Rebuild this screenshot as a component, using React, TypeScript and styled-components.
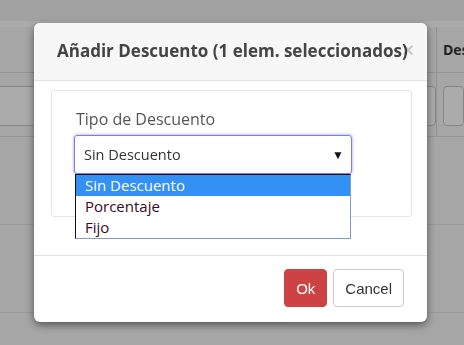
import React from 'react';
import styled, { createGlobalStyle } from 'styled-components';

const GlobalStyle = createGlobalStyle`
  * { box-sizing: border-box; }
  html, body { margin: 0; padding: 0; }
  body {
    width: 464px;
    height: 345px;
    overflow: hidden;
    background: #f8f8f8;
    font-family: "Open Sans", "Liberation Sans", sans-serif;
  }
`;

const Page = styled.div`
  display: flex;
  flex-direction: column;
  height: 345px;
`;

const TopStrip = styled.div`
  height: 21px;
  background: #f2f2f2;
  flex-shrink: 0;
`;

const WhiteBand = styled.div`
  height: 6px;
  background: #ffffff;
  flex-shrink: 0;
`;

const Table = styled.div`
  display: grid;
  grid-template-columns: 436px 1fr;
  background: #f8f8f8;
`;

const HeadCell = styled.div<{ $divider?: boolean }>`
  height: 46px;
  border-bottom: 1px solid #dcdcdc;
  border-left: ${(p) => (p.$divider ? '1px solid #dcdcdc' : 'none')};
  display: flex;
  align-items: center;
  padding-left: 6px;
  font-weight: 700;
  font-size: 14px;
  color: #333;
  white-space: nowrap;
  overflow: hidden;
`;

const FilterCell = styled.div<{ $divider?: boolean }>`
  height: 64px;
  border-bottom: 1px solid #dcdcdc;
  border-left: ${(p) => (p.$divider ? '1px solid #dcdcdc' : 'none')};
  padding: 13px 0 0 6px;
`;

const FilterBox = styled.div<{ $offset?: number }>`
  height: 40px;
  margin-left: ${(p) => p.$offset ?? 0}px;
  border: 1px solid #c8c8c8;
  border-radius: 4px;
  background: #fff;
`;

const BodyRow = styled.div`
  grid-column: 1 / span 2;
  height: 88px;
  border-bottom: 1px solid #e4e4e4;
`;

const Backdrop = styled.div`
  position: fixed;
  inset: 0;
  background: rgba(0, 0, 0, 0.33);
`;

const Modal = styled.div`
  position: fixed;
  left: 34px;
  top: 23px;
  width: 393px;
  background: #fff;
  border-radius: 6px;
  box-shadow: 0 3px 9px rgba(0, 0, 0, 0.5);
`;

const Header = styled.div`
  position: relative;
  padding: 16px 23px 17px 23px;
  background: #f7f7f7;
  border-bottom: 1px solid #e2e2e2;
  border-radius: 6px 6px 0 0;
`;

const Title = styled.h4`
  margin: 0;
  font-size: 17px;
  line-height: 24px;
  font-weight: 700;
  color: #444;
  white-space: nowrap;
`;

const Close = styled.span`
  position: absolute;
  right: 13px;
  top: 17px;
  font-family: "Liberation Sans", sans-serif;
  font-size: 20px;
  font-weight: 700;
  line-height: 20px;
  color: #000;
  opacity: 0.18;
`;

const Body = styled.div`
  padding: 9px 15px 38px 17px;
`;

const Well = styled.div`
  border: 1px solid #e6e6e6;
  border-radius: 3px;
  padding: 18px 23px 42px 22px;
`;

const Label = styled.div`
  font-size: 16px;
  line-height: 21px;
  color: #555;
  padding-left: 2px;
  margin-bottom: 5px;
`;

const SelectWrap = styled.div`
  position: relative;
  width: 278px;
`;

const SelectBox = styled.div`
  height: 39px;
  display: flex;
  align-items: center;
  justify-content: space-between;
  padding: 0 7px 0 9px;
  border: 1px solid #7a7af5;
  border-radius: 3px;
  box-shadow: 0 0 3px rgba(90, 90, 255, 0.7);
  font-size: 14.5px;
  color: #333;
`;

const Arrow = styled.span`
  font-size: 12px;
  color: #111;
`;

const OptionList = styled.div`
  position: absolute;
  left: 1px;
  top: 39px;
  width: 276px;
  background: #fff;
  border-left: 1px solid #111;
  border-top: 1px solid #111;
  border-right: 1px solid #7f9dc9;
  border-bottom: 1px solid #7f9dc9;
  z-index: 2;
`;

const Option = styled.div<{ $selected?: boolean }>`
  height: 21px;
  line-height: 21px;
  padding-left: 9px;
  font-size: 15px;
  background: ${(p) => (p.$selected ? '#3390f5' : '#fff')};
  color: ${(p) => (p.$selected ? '#fff' : '#3a0a22')};
`;

const Footer = styled.div`
  display: flex;
  justify-content: flex-end;
  gap: 6px;
  padding: 13px 23px 15px;
  border-top: 1px solid #e2e2e2;
`;

const Button = styled.button<{ $variant?: 'danger' | 'default' }>`
  height: 38px;
  padding: 0 11px;
  border-radius: 4px;
  font-family: "Liberation Sans", Arial, sans-serif;
  font-size: 15px;
  cursor: pointer;
  background: ${(p) => (p.$variant === 'danger' ? '#cd4343' : '#fff')};
  color: ${(p) => (p.$variant === 'danger' ? '#fff' : '#333')};
  border: 1px solid ${(p) => (p.$variant === 'danger' ? '#cd4343' : '#cccccc')};
`;

const options = ['Sin Descuento', 'Porcentaje', 'Fijo'];

export default function App() {
  return (
    <>
      <GlobalStyle />
      <Page>
        <TopStrip />
        <WhiteBand />
        <Table>
          <HeadCell />
          <HeadCell $divider>Des</HeadCell>
          <FilterCell>
            <FilterBox $offset={-20} />
          </FilterCell>
          <FilterCell $divider>
            <FilterBox />
          </FilterCell>
          <BodyRow />
          <BodyRow />
        </Table>
      </Page>
      <Backdrop />
      <Modal>
        <Header>
          <Title>Añadir Descuento (1 elem. seleccionados)</Title>
          <Close>×</Close>
        </Header>
        <Body>
          <Well>
            <Label>Tipo de Descuento</Label>
            <SelectWrap>
              <SelectBox>
                <span>Sin Descuento</span>
                <Arrow>▼</Arrow>
              </SelectBox>
              <OptionList>
                {options.map((o, i) => (
                  <Option key={o} $selected={i === 0}>
                    {o}
                  </Option>
                ))}
              </OptionList>
            </SelectWrap>
          </Well>
        </Body>
        <Footer>
          <Button $variant="danger">Ok</Button>
          <Button>Cancel</Button>
        </Footer>
      </Modal>
    </>
  );
}
